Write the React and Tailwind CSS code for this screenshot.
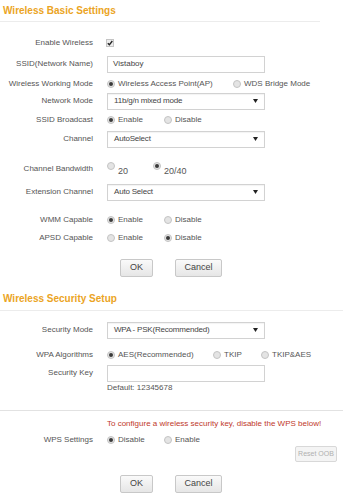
import React from "react";

const Radio = ({ on, cls }) => (
  <span className={`w-[8px] h-[8px] shrink-0 rounded-full border border-[#c4c4c4] bg-[#e4e4e4] flex items-center justify-center ${cls || ""}`}>
    {on && <span className="w-[4px] h-[4px] rounded-full bg-[#3a3a3a]" />}
  </span>
);

const Opt = ({ on, label, w }) => (
  <div className={`flex items-center ${w || ""}`}>
    <Radio on={on} />
    <span className="ml-[3px] whitespace-nowrap">{label}</span>
  </div>
);

const Row = ({ label, h, children }) => (
  <div className={`flex items-center ${h}`}>
    <div className="w-[93px] shrink-0 text-right whitespace-nowrap">{label}</div>
    <div className="ml-[14px] flex items-center">{children}</div>
  </div>
);

const Arrow = () => (
  <svg width="5" height="4" viewBox="0 0 5 4" className="absolute right-[6px] top-1/2 -translate-y-1/2">
    <path d="M0 0 L5 0 L2.5 4 Z" fill="#222" />
  </svg>
);

const Select = ({ value }) => (
  <div className="relative w-[158px] h-[17px] border border-[#d2d2d2] bg-white flex items-center pl-[6px] text-[#444] shadow-[inset_0_1px_1px_rgba(0,0,0,0.05)]">
    <span className="tracking-[-0.2px]">{value}</span>
    <Arrow />
  </div>
);

const Input = ({ value }) => (
  <div className="w-[158px] h-[17px] border border-[#d2d2d2] bg-white flex items-center pl-[5px] text-[#444]">
    {value}
  </div>
);

const Btn = ({ children, w }) => (
  <div className={`${w} h-[18px] border border-[#c8c8c8] rounded-[2px] bg-gradient-to-b from-[#fafafa] to-[#e6e6e6] flex items-center justify-center text-[#444] text-[9px]`}>
    {children}
  </div>
);

const Title = ({ children, full }) => (
  <div className={`flex items-center pl-[3px] text-[#eba424] font-bold text-[10px] border-b border-[#ececec] ${full ? "w-full" : "w-[320px]"}`}>
    {children}
  </div>
);

export default function App() {
  return (
    <div
      className="w-[343px] h-[500px] bg-white text-[#555] text-[8px] overflow-hidden"
      style={{ fontFamily: '"Liberation Sans", Arial, sans-serif' }}
    >
      <div className="h-[22px] flex">
        <Title>Wireless Basic Settings</Title>
      </div>

      <div className="mt-[12px]">
        <Row label="Enable Wireless" h="h-[18px]">
          <span className="-ml-[1px] w-[8px] h-[8px] border border-[#c4c4c4] bg-[#ececec] flex items-center justify-center">
            <svg width="6" height="6" viewBox="0 0 6 6">
              <path d="M0.8 3.2 L2.4 4.8 L5.3 1" stroke="#222" strokeWidth="1.4" fill="none" />
            </svg>
          </span>
        </Row>
        <Row label="SSID(Network Name)" h="h-[24px]">
          <Input value="Vistaboy" />
        </Row>
        <Row label="Wireless Working Mode" h="h-[16px]">
          <Opt on label="Wireless Access Point(AP)" w="w-[126px]" />
          <Opt label="WDS Bridge Mode" />
        </Row>
        <Row label="Network Mode" h="h-[18px]">
          <Select value="11b/g/n mixed mode" />
        </Row>
        <Row label="SSID Broadcast" h="h-[20px]">
          <Opt on label="Enable" w="w-[57px]" />
          <Opt label="Disable" />
        </Row>
        <Row label="Channel" h="h-[18px]">
          <Select value="AutoSelect" />
        </Row>
      </div>

      <div className="mt-[10px]">
        <Row label="Channel Bandwidth" h="h-[22px]">
          <div className="flex items-center w-[46px]">
            <Radio cls="-translate-y-[3px]" />
            <span className="ml-[3px] translate-y-[3px] text-[9px]">20</span>
          </div>
          <div className="flex items-center">
            <Radio on cls="-translate-y-[3px]" />
            <span className="ml-[3px] translate-y-[3px] text-[9px]">20/40</span>
          </div>
        </Row>
        <div className="mt-[3px]">
          <Row label="Extension Channel" h="h-[18px]">
            <Select value="Auto Select" />
          </Row>
        </div>
        <div className="mt-[10px]">
          <Row label="WMM Capable" h="h-[18px]">
            <Opt on label="Enable" w="w-[57px]" />
            <Opt label="Disable" />
          </Row>
          <Row label="APSD Capable" h="h-[18px]">
            <Opt label="Enable" w="w-[57px]" />
            <Opt on label="Disable" />
          </Row>
        </div>
      </div>

      <div className="mt-[12px] flex pl-[120px] gap-[22px]">
        <Btn w="w-[33px]">OK</Btn>
        <Btn w="w-[47px]">Cancel</Btn>
      </div>

      <div className="mt-[10px] h-[24px] flex">
        <Title full>Wireless Security Setup</Title>
      </div>

      <div className="mt-[10px]">
        <Row label="Security Mode" h="h-[18px]">
          <Select value="WPA - PSK(Recommended)" />
        </Row>
      </div>
      <div className="mt-[7px]">
        <Row label="WPA Algorithms" h="h-[18px]">
          <Opt on label="AES(Recommended)" w="w-[106px]" />
          <Opt label="TKIP" w="w-[48px]" />
          <Opt label="TKIP&AES" />
        </Row>
        <Row label="Security Key" h="h-[18px]">
          <Input value="" />
        </Row>
        <Row label="" h="h-[12px]">
          <span>Default: 12345678</span>
        </Row>
      </div>

      <div className="h-[17px] border-b border-[#e2e2e2]" />

      <div className="mt-[6px]">
        <Row label="" h="h-[14px]">
          <span className="text-[#c0392b] whitespace-nowrap">
            To configure a wireless security key, disable the WPS below!
          </span>
        </Row>
        <div className="mt-[3px]">
          <Row label="WPS Settings" h="h-[12px]">
            <Opt on label="Disable" w="w-[57px]" />
            <Opt label="Enable" />
          </Row>
        </div>
        <div className="h-[16px] flex justify-end pr-[6px]">
          <div className="w-[42px] h-[16px] border border-[#d8d8d8] rounded-[2px] bg-[#f4f4f4] flex items-center justify-center text-[#b0b0b0] text-[7px]">
            Reset OOB
          </div>
        </div>
      </div>

      <div className="mt-[13px] flex pl-[120px] gap-[22px]">
        <Btn w="w-[33px]">OK</Btn>
        <Btn w="w-[47px]">Cancel</Btn>
      </div>
    </div>
  );
}
